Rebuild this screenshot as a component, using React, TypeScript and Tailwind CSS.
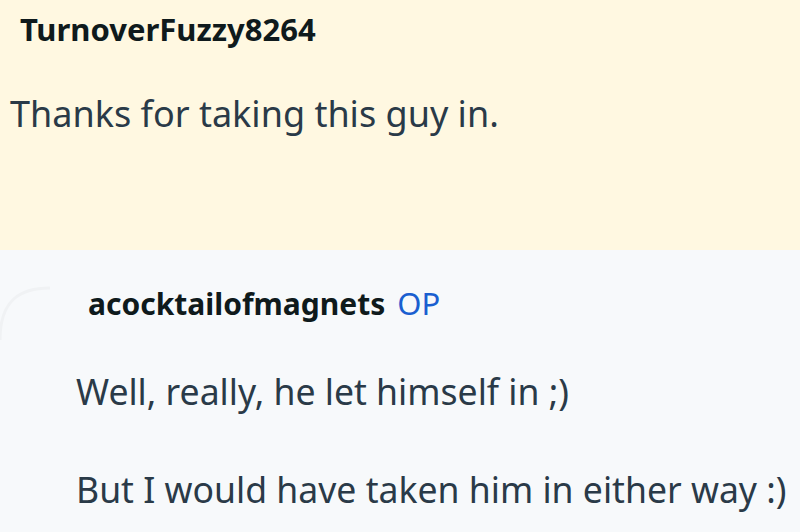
export default function App() {
  const font = { fontFamily: '"Noto Sans", "Open Sans", sans-serif' };
  return (
    <div className="w-[800px] h-[532px] overflow-hidden bg-[#f7f9fb] text-[#2a3a48]" style={font}>
      <div className="h-[250px] bg-[#fff8e1] pt-[9px]">
        <div className="pl-[20px] text-[31px] font-bold leading-[40px] text-[#0f1a1c]">TurnoverFuzzy8264</div>
        <p className="pl-[10px] mt-[41px] text-[36px] leading-[48px]">Thanks for taking this guy in.</p>
      </div>
      <div className="relative pt-[33px]">
        <svg className="absolute left-0 top-[30px]" width="60" height="80" viewBox="0 0 60 80">
          <path d="M0 60 C0 20 20 8 50 8" fill="none" stroke="#f0f2f4" strokeWidth="3" />
        </svg>
        <div className="pl-[88px] flex items-baseline gap-[12px] leading-[40px]">
          <span className="text-[30px] font-bold text-[#0f1a1c]">acocktailofmagnets</span>
          <span className="text-[31px] text-[#1a5fd0]">OP</span>
        </div>
        <div className="pl-[76px] mt-[43px] text-[35.6px] leading-[48px]">
          <p>Well, really, he let himself in ;)</p>
          <p className="mt-[50px]">But I would have taken him in either way :)</p>
        </div>
      </div>
    </div>
  );
}
